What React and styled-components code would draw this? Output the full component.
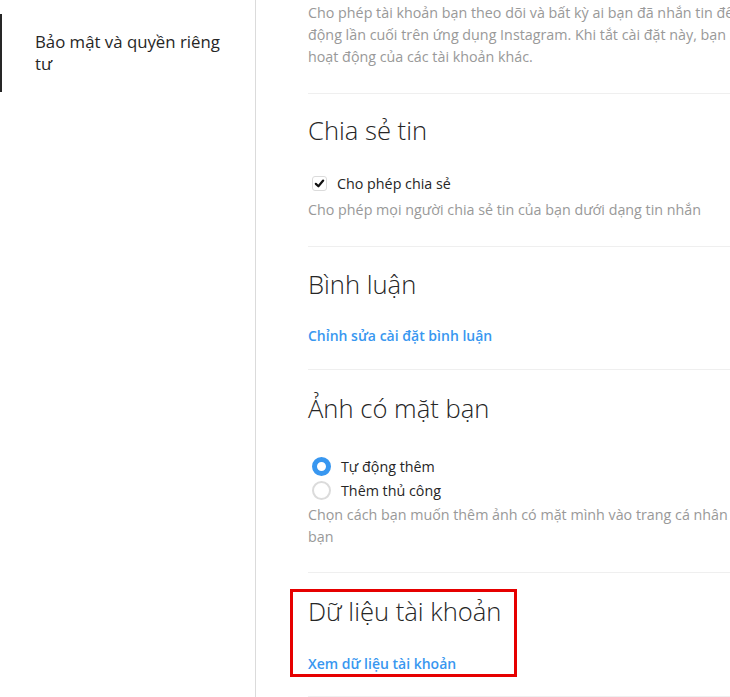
import styled, { createGlobalStyle } from "styled-components";

const FONT = `"Open Sans", "Noto Sans", sans-serif`;

const GlobalStyle = createGlobalStyle`
  html, body {
    margin: 0;
    padding: 0;
    background: #fff;
    overflow: hidden;
  }
  body {
    font-family: ${FONT};
    color: #262626;
  }
`;

const Page = styled.div`
  display: flex;
  width: 730px;
  height: 697px;
  overflow: hidden;
`;

const Sidebar = styled.nav`
  flex: 0 0 255px;
  border-right: 1px solid #dbdbdb;
  padding-top: 14px;
`;

const NavItem = styled.div`
  border-left: 2px solid ${(p) => (p.active ? "#262626" : "transparent")};
  padding: 17px 30px 17px 33px;
  font-size: 16.8px;
  line-height: 22px;
  font-weight: ${(p) => (p.active ? 500 : 400)};
  color: #262626;
`;

const Main = styled.main`
  flex: 0 0 auto;
  width: 520px;
  padding-left: 52px;
`;

const Section = styled.section`
  position: relative;
  padding: ${(p) => p.pad || "22px 0 25px"};
  border-bottom: 1px solid #efefef;
`;

const Heading = styled.h2`
  margin: 0;
  font-size: 25.6px;
  line-height: 30px;
  font-weight: 300;
  color: #262626;
`;

const Description = styled.p`
  margin: ${(p) => p.mt || "0"} 0 0;
  font-size: 14.3px;
  line-height: 22px;
  color: #999;
  white-space: nowrap;
`;

const LinkButton = styled.button`
  display: block;
  margin-top: ${(p) => p.mt || "26px"};
  padding: 0;
  border: none;
  background: transparent;
  font-family: ${FONT};
  font-size: 14px;
  line-height: 20px;
  font-weight: 600;
  color: #3897f0;
  cursor: pointer;
`;

const OptionRow = styled.label`
  display: flex;
  align-items: center;
  gap: ${(p) => p.gap || "10px"};
  height: ${(p) => p.h || "22px"};
  padding-left: 4px;
  font-size: 14.3px;
  font-weight: 500;
  color: #262626;
`;

const Options = styled.div`
  margin-top: ${(p) => p.mt || "26px"};
`;

const CheckBox = styled.span`
  display: inline-flex;
  align-items: center;
  justify-content: center;
  width: 13px;
  height: 13px;
  border: 1px solid #dbdbdb;
  border-radius: 3px;
  background: #fff;
`;

const Radio = styled.span`
  box-sizing: border-box;
  display: inline-block;
  width: 19px;
  height: 19px;
  border-radius: 50%;
  background: #fff;
  border: ${(p) => (p.checked ? "5px solid #3897f0" : "2px solid #dbdbdb")};
`;

const Highlight = styled.div`
  position: absolute;
  left: -18px;
  top: 16px;
  width: 221px;
  height: 82px;
  border: 3px solid #e60000;
`;

function Check() {
  return (
    <svg width="11" height="11" viewBox="0 0 12 12">
      <path
        d="M2 6.4 L4.8 9 L10 2.8"
        fill="none"
        stroke="#111"
        strokeWidth="2.4"
        strokeLinecap="round"
        strokeLinejoin="round"
      />
    </svg>
  );
}

export default function App() {
  return (
    <>
      <GlobalStyle />
      <Page>
        <Sidebar>
          <NavItem active>
            Bảo mật và quyền riêng
            <br />
            tư
          </NavItem>
        </Sidebar>
        <Main>
          <Section pad="2px 0 25px">
            <Description>
              Cho phép tài khoản bạn theo dõi và bất kỳ ai bạn đã nhắn tin để xem
              <br />
              động lần cuối trên ứng dụng Instagram. Khi tắt cài đặt này, bạn sẽ không
              <br />
              hoạt động của các tài khoản khác.
            </Description>
          </Section>

          <Section pad="22px 0 25px">
            <Heading>Chia sẻ tin</Heading>
            <Options mt="26px">
              <OptionRow gap="10px">
                <CheckBox>
                  <Check />
                </CheckBox>
                Cho phép chia sẻ
              </OptionRow>
            </Options>
            <Description mt="5px">
              Cho phép mọi người chia sẻ tin của bạn dưới dạng tin nhắn
            </Description>
          </Section>

          <Section pad="23px 0 23px">
            <Heading>Bình luận</Heading>
            <LinkButton mt="26px">Chỉnh sửa cài đặt bình luận</LinkButton>
          </Section>

          <Section pad="24px 0 24px">
            <Heading>Ảnh có mặt bạn</Heading>
            <Options mt="30px">
              <OptionRow h="24px" gap="10px">
                <Radio checked />
                Tự động thêm
              </OptionRow>
              <OptionRow h="24px" gap="10px">
                <Radio />
                Thêm thủ công
              </OptionRow>
            </Options>
            <Description mt="2px">
              Chọn cách bạn muốn thêm ảnh có mặt mình vào trang cá nhân của
              <br />
              bạn
            </Description>
          </Section>

          <Section pad="24px 0 22px">
            <Highlight />
            <Heading>Dữ liệu tài khoản</Heading>
            <LinkButton mt="27px">Xem dữ liệu tài khoản</LinkButton>
          </Section>
        </Main>
      </Page>
    </>
  );
}
